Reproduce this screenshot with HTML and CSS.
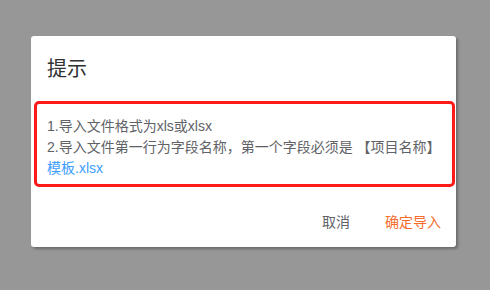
FILE: index.html
```html
<!DOCTYPE html>
<html lang="zh">
<head>
<meta charset="utf-8">
<link rel="stylesheet" href="styles.css">
</head>
<body>
<div class="dialog">
  <div class="dialog-header">提示</div>
  <div class="dialog-body">
    <div class="tip-box">
      <p class="line">1.导入文件格式为xls或xlsx</p>
      <p class="line">2.导入文件第一行为字段名称，第一个字段必须是 【项目名称】</p>
      <a class="link">模板.xlsx</a>
    </div>
  </div>
  <div class="dialog-footer">
    <span class="btn">取消</span>
    <span class="btn btn-primary">确定导入</span>
  </div>
</div>
</body>
</html>
```
FILE: styles.css
```css
html, body {
  margin: 0;
  padding: 0;
  width: 490px;
  height: 290px;
  background: #979797;
  font-family: "Liberation Sans", "Noto Sans CJK SC", sans-serif;
  overflow: hidden;
}
body {
  padding: 36px 0 0 31px;
  box-sizing: border-box;
}
.dialog {
  width: 425px;
  height: 211px;
  background: #fff;
  border-radius: 3px;
  box-shadow: 2px 2px 3px rgba(0,0,0,0.3);
  display: flex;
  flex-direction: column;
}
.dialog-header {
  padding: 21px 16px 0;
  font-size: 20px;
  line-height: 24px;
  color: #303133;
  height: 44px;
}
.dialog-body {
  padding: 0 1px 0 3px;
}
.tip-box {
  border: 3px solid #ff1a1a;
  border-radius: 5px;
  padding: 12px 10px 6px 10px;
  font-size: 14px;
  line-height: 20px;
  color: #606266;
}
.line {
  margin: 0;
}
.line + .line {
  margin-top: 1px;
}
.link {
  color: #409eff;
  display: block;
  margin-top: 1px;
}
.dialog-footer {
  display: flex;
  justify-content: flex-end;
  gap: 35px;
  padding: 25px 15px 0;
  font-size: 14px;
  line-height: 20px;
}
.btn {
  color: #606266;
}
.btn-primary {
  color: #f56c2d;
}
```
